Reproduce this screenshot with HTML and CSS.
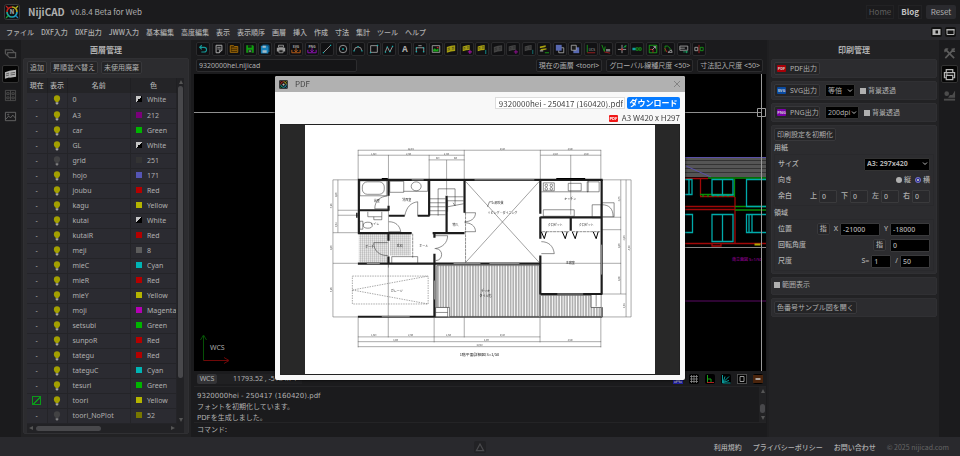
FILE: index.html
```html
<!DOCTYPE html>
<html lang="ja">
<head>
  <meta charset="utf-8">
  <title>NijiCAD</title>
  <link rel="stylesheet" href="styles.css">
</head>
<body>

<!-- shared icons -->
<svg class="defs" width="0" height="0">
  <symbol id="bulb" viewBox="0 0 8 10">
    <circle cx="4" cy="3.4" r="3.1" fill="currentColor"/>
    <path d="M2.6 5.5h2.8v1.6H2.6z" fill="currentColor"/>
    <path d="M2.7 7.2h2.6v1.2L4.6 9.4H3.4L2.7 8.4z" fill="#a5a5a5"/>
  </symbol>
  <symbol id="logo" viewBox="0 0 16 16">
    <rect x=".5" y=".5" width="15" height="15" rx="2" fill="#101012" stroke="#3a3a3d"/>
    <path d="M8 3a5 5 0 0 1 5 5" fill="none" stroke="#b5a81c" stroke-width="1.7"/>
    <path d="M13 8a5 5 0 0 1-5 5" fill="none" stroke="#1f9fc0" stroke-width="1.7"/>
    <path d="M8 13a5 5 0 0 1-5-5" fill="none" stroke="#1fa898" stroke-width="1.7"/>
    <path d="M3 8a5 5 0 0 1 5-5" fill="none" stroke="#c0271b" stroke-width="1.7"/>
    <path d="M2 2l2 2" stroke="#c02020" stroke-width="1.2"/>
    <path d="M14 2l-2 2" stroke="#a8b020" stroke-width="1.2"/>
    <path d="M2 14l2-2" stroke="#20a030" stroke-width="1.2"/>
    <path d="M14 14l-2-2" stroke="#2080b8" stroke-width="1.2"/>
  </symbol>
  <symbol id="layers" viewBox="0 0 12 12">
    <path d="M1 3.5l5-1.5v7L1 10.5zM6 2l5-.5v7L6 9z" fill="currentColor"/>
    <path d="M2 5.5l3-.8M2 7.5l3-.8M7 4.2l3-.4M7 6.2l3-.4" stroke="#222" stroke-width=".7"/>
  </symbol>
</svg>

<header class="header">
  <svg class="logo" viewBox="0 0 16 16"><use href="#logo"/><text x="8" y="10.300" text-anchor="middle" font-size="6" font-weight="700" fill="#b5b5b5">N</text></svg>
  <h1>NijiCAD</h1>
  <span class="version">v0.8.4 Beta for Web</span>
  <nav class="head-nav">
    <a href="#" class="home">Home</a>
    <a href="#" class="blog">Blog</a>
    <button class="reset">Reset</button>
  </nav>
</header>

<nav class="menubar">
  <a href="#">ファイル</a>
  <a href="#">DXF入力</a>
  <a href="#">DXF出力</a>
  <a href="#">JWW入力</a>
  <a href="#">基本編集</a>
  <a href="#">高度編集</a>
  <a href="#">表示</a>
  <a href="#">表示順序</a>
  <a href="#">画層</a>
  <a href="#">挿入</a>
  <a href="#">作成</a>
  <a href="#">寸法</a>
  <a href="#">集計</a>
  <a href="#">ツール</a>
  <a href="#">ヘルプ</a>
  <div class="window-buttons">
    <button aria-label="パネル"><svg viewBox="0 0 10 8"><path d="M1 1h8v6H1z" fill="#b5b5b5"/><path d="M4 2.500h2.500v3H4z" fill="#111"/></svg></button>
    <button aria-label="全画面"><svg viewBox="0 0 10 8"><path d="M1.500 1.500h7v5h-7z" fill="none" stroke="#b5b5b5"/><path d="M1 1h8v1.500H1z" fill="#b5b5b5"/></svg></button>
  </div>
</nav>

<main class="main">

  <div class="tabs">
    <button aria-label="図面"><svg viewBox="0 0 14 14"><path d="M1.500 3h7l2 2v4h-7l-2-2z" fill="none" stroke="#555" stroke-width="1.300"/><path d="M4 6h8.500v5.500H6L4 9.500z" fill="#1b1b1d" stroke="#555" stroke-width="1.300"/></svg></button>
    <button class="active" aria-label="画層"><svg viewBox="0 0 14 14"><path d="M1 4.500l5-1.500v7L1 11.500zM6 3l7-1v7.500L6 10.500z" fill="#b5b5b5"/><path d="M2 6.500l3.500-1M2 8.500l3.500-1M7 5.500l5-.8M7 7.500l5-.8" stroke="#444" stroke-width=".8"/></svg></button>
    <button aria-label="部品"><svg viewBox="0 0 14 14" fill="none" stroke="#4c4c4c"><path d="M1.500 1.500h11v11h-11zM7 1.500v11M3 4h2.500v2H3zM3 8.500h2.500v2H3zM8.500 4H11v2H8.500zM8.500 8.500H11v2H8.500z"/></svg></button>
    <button aria-label="画像"><svg viewBox="0 0 14 14" fill="none" stroke="#666"><path d="M1.500 2.500h11v9h-11z"/><path d="M2 10l3-3.500 2 2 2.500-3 2.500 3"/><circle cx="4.500" cy="5" r=".6"/></svg></button>
  </div>

  <section class="panel layer-panel">
    <h2>画層管理</h2>
    <div class="box layer-box">
      <div class="actions">
        <button>追加</button>
        <button>昇順並べ替え</button>
        <button>未使用廃棄</button>
      </div>
      <div class="layer-scroll">
        <table class="layers">
          <thead><tr><th class="c1">現在</th><th class="c2">表示</th><th>名前</th><th class="c4">色</th></tr></thead>
          <tbody>
            <tr><td>-</td><td><svg><use href="#bulb"/></svg></td><td>0</td><td><i class="white"></i>White</td></tr>
            <tr><td>-</td><td><svg><use href="#bulb"/></svg></td><td>A3</td><td><i class="c212"></i>212</td></tr>
            <tr><td>-</td><td><svg><use href="#bulb"/></svg></td><td>car</td><td><i class="green"></i>Green</td></tr>
            <tr><td>-</td><td><svg><use href="#bulb"/></svg></td><td>GL</td><td><i class="white"></i>White</td></tr>
            <tr><td>-</td><td><svg class="off"><use href="#bulb"/></svg></td><td>grid</td><td><i class="c251"></i>251</td></tr>
            <tr><td>-</td><td><svg><use href="#bulb"/></svg></td><td>hojo</td><td><i class="c171"></i>171</td></tr>
            <tr><td>-</td><td><svg><use href="#bulb"/></svg></td><td>joubu</td><td><i class="red"></i>Red</td></tr>
            <tr><td>-</td><td><svg><use href="#bulb"/></svg></td><td>kagu</td><td><i class="yellow"></i>Yellow</td></tr>
            <tr><td>-</td><td><svg><use href="#bulb"/></svg></td><td>kutai</td><td><i class="white"></i>White</td></tr>
            <tr><td>-</td><td><svg><use href="#bulb"/></svg></td><td>kutaiR</td><td><i class="red"></i>Red</td></tr>
            <tr><td>-</td><td><svg><use href="#bulb"/></svg></td><td>meji</td><td><i class="c8"></i>8</td></tr>
            <tr><td>-</td><td><svg><use href="#bulb"/></svg></td><td>mieC</td><td><i class="cyan"></i>Cyan</td></tr>
            <tr><td>-</td><td><svg><use href="#bulb"/></svg></td><td>mieR</td><td><i class="red"></i>Red</td></tr>
            <tr><td>-</td><td><svg><use href="#bulb"/></svg></td><td>mieY</td><td><i class="yellow"></i>Yellow</td></tr>
            <tr><td>-</td><td><svg><use href="#bulb"/></svg></td><td>moji</td><td><i class="magenta"></i>Magenta</td></tr>
            <tr><td>-</td><td><svg><use href="#bulb"/></svg></td><td>setsubi</td><td><i class="green"></i>Green</td></tr>
            <tr><td>-</td><td><svg><use href="#bulb"/></svg></td><td>sunpoR</td><td><i class="red"></i>Red</td></tr>
            <tr><td>-</td><td><svg><use href="#bulb"/></svg></td><td>tategu</td><td><i class="red"></i>Red</td></tr>
            <tr><td>-</td><td><svg><use href="#bulb"/></svg></td><td>tateguC</td><td><i class="cyan"></i>Cyan</td></tr>
            <tr><td>-</td><td><svg><use href="#bulb"/></svg></td><td>tesuri</td><td><i class="green"></i>Green</td></tr>
            <tr><td><input type="checkbox" class="current" aria-label="toori 現在" checked></td><td><svg><use href="#bulb"/></svg></td><td>toori</td><td><i class="yellow"></i>Yellow</td></tr>
            <tr><td>-</td><td><svg class="off"><use href="#bulb"/></svg></td><td>toori_NoPlot</td><td><i class="c52"></i>52</td></tr>
          </tbody>
        </table>
        <div class="vbar"><b class="up"></b><span></span><b class="down"></b></div>
        <div class="hbar"><b class="prev"></b><span></span><b class="next"></b></div>
      </div>
    </div>
  </section>

  <section class="center">
    <div class="toolbar">
      <button aria-label="元に戻す"><svg viewBox="0 0 12 12"><path d="M4.500 1.500L2 4l2.500 2.500M2 4h5.500a2.700 2.700 0 0 1 0 5.500H4" fill="none" stroke="#159a9a" stroke-width="1.300"/></svg></button>
      <button aria-label="新規"><svg viewBox="0 0 12 12"><path d="M2.500 1.500h7v6l-3 3h-4z" fill="none" stroke="#aaa" stroke-width="1.200"/><path d="M4 4h4M4 6h4M6.500 10.500v-3h3" fill="none" stroke="#aaa"/></svg></button>
      <button aria-label="開く"><svg viewBox="0 0 12 12"><path d="M1.500 2h4l1 1h4v7h-9z" fill="#3a2500" stroke="#b87a08"/><path d="M3 5h6.500M3 7.500h6.500" stroke="#b87a08"/></svg></button>
      <button aria-label="保存"><svg viewBox="0 0 12 12"><path d="M1.500 1.500h8l1 1v8h-9z" fill="#10a010"/><path d="M3.500 1.500h4.500v3H3.500zM3.500 7h5v3.500h-5z" fill="#142814"/><path d="M4.500 8.500h3" stroke="#ccc"/></svg></button>
      <button aria-label="別名保存"><svg viewBox="0 0 12 12"><path d="M3 .5h7l1.500 1.500v7.500H3z" fill="#0b4f78"/><path d="M1 2h7.500L10 3.500v8H1z" fill="#1780b8"/><path d="M3 2h4v2.500H3zM3 7.500h5v3H3z" fill="#a5bac5"/></svg></button>
      <button aria-label="印刷"><svg viewBox="0 0 12 12"><path d="M1 4.500h10v4.500H1z" fill="#999"/><path d="M3 1.500h6v2.500H3zM3.500 7h5v3.500h-5z" fill="#1b1b1b" stroke="#999"/></svg></button>
      <button aria-label="SVG"><svg viewBox="0 0 12 12"><text x="6" y="4.500" text-anchor="middle" font-size="4" font-weight="700" fill="#aaa">SVG</text><path d="M1 7v3.500h10V7M6 5v4M4 7.500l2 2 2-2" fill="none" stroke="#b05a18" stroke-width="1.200"/></svg></button>
      <button aria-label="PNG"><svg viewBox="0 0 12 12"><text x="6" y="4.500" text-anchor="middle" font-size="4" font-weight="700" fill="#aaa">PNG</text><path d="M1 7v3.500h10V7M6 5v4M4 7.500l2 2 2-2" fill="none" stroke="#8a12b0" stroke-width="1.200"/></svg></button>
      <button aria-label="線分"><svg viewBox="0 0 12 12"><path d="M2 10l8-8" stroke="#aaa"/><path d="M1 9.500h1.500V11H1zM9.500 1H11v1.500H9.500z" fill="#10b0b0"/></svg></button>
      <button aria-label="円"><svg viewBox="0 0 12 12"><circle cx="6" cy="6" r="4.500" fill="none" stroke="#aaa"/><path d="M5 5h2v2H5z" fill="#10b0b0"/></svg></button>
      <button aria-label="円弧"><svg viewBox="0 0 12 12"><path d="M1.500 8a4.500 4.500 0 0 1 9 0" fill="none" stroke="#aaa"/><path d="M.5 7.500H2V9H.5zM10 7.500h1.500V9H10zM5.300 2.500h1.500V4H5.300z" fill="#10b0b0"/></svg></button>
      <button aria-label="矩形"><svg viewBox="0 0 12 12"><path d="M2 2h8v8H2z" fill="none" stroke="#aaa"/><path d="M1 9.500h1.500V11H1zM9.500 1H11v1.500H9.500z" fill="#10b0b0"/></svg></button>
      <button aria-label="ポリライン"><svg viewBox="0 0 12 12"><path d="M1.500 9.500l2.500-6 3 6 3.500-7" fill="none" stroke="#aaa"/><path d="M1 9h1.500v1.500H1zM3.300 3h1.500v1.500H3.300zM6.300 8.500h1.500V10H6.300zM9.500 2H11v1.500H9.500z" fill="#10b0b0"/></svg></button>
      <button aria-label="文字"><svg viewBox="0 0 12 12"><text x="6" y="10" text-anchor="middle" font-size="10" font-weight="700" fill="#aaa">A</text></svg></button>
      <button aria-label="寸法"><svg viewBox="0 0 12 12"><path d="M1.500 10V4.500h9V10" fill="none" stroke="#aaa"/><path d="M1 8.500h1.500V10H1zM9.500 8.500H11V10H9.500zM1 4h1.500v1.500H1zM9.500 4H11v1.500H9.500z" fill="#10b0b0"/><path d="M4 2h4" stroke="#aaa"/></svg></button>
      <button aria-label="画像"><svg viewBox="0 0 12 12"><path d="M1.500 2h9v8h-9z" fill="#111" stroke="#aaa"/><path d="M2.500 9V7l2-2 2 2L9 5v4z" fill="#18a018"/><path d="M7 3.500h2V5H7z" fill="#c02020"/></svg></button>
      <button class="ly" aria-label="画層"><svg viewBox="0 0 12 12"><use href="#layers"/></svg></button>
      <button class="ly" aria-label="画層追加"><svg viewBox="0 0 12 12"><use href="#layers" width="10" height="10"/><path d="M9.500 7v5M7 9.500h5" stroke="#c010c0"/></svg></button>
      <button class="ly" aria-label="画層1"><svg viewBox="0 0 12 12"><use href="#layers" width="10" height="10"/><path d="M10.500 7v5" stroke="#10a0a0"/></svg></button>
      <button class="lg" aria-label="画層非表示"><svg viewBox="0 0 12 12"><use href="#layers"/></svg></button>
      <button class="lg" aria-label="非表示追加"><svg viewBox="0 0 12 12"><use href="#layers" width="10" height="10"/><path d="M9.500 7v5M7 9.500h5" stroke="#a010a0"/></svg></button>
      <button class="lg" aria-label="非表示1"><svg viewBox="0 0 12 12"><use href="#layers" width="10" height="10"/><path d="M10.500 7v5" stroke="#108080"/></svg></button>
      <button class="ly" aria-label="画層移動"><svg viewBox="0 0 12 12"><path d="M1 3l7-1.500v2L1 5zM2 6l7-1v1.500L2 8z" fill="#a8a010"/><path d="M1 7.500h4v1.500H1z" fill="#999"/><path d="M7 10.500h5" stroke="#18b018"/></svg></button>
      <button aria-label="前面"><svg viewBox="0 0 12 12"><path d="M4.500 4.500h6v6h-6z" fill="none" stroke="#aaa"/><path d="M1 1h7v7H1z" fill="#5868b0"/></svg></button>
      <button aria-label="背面"><svg viewBox="0 0 12 12"><path d="M4 4h7v7H4z" fill="#5868b0"/><path d="M1.500 1.500h6v6h-6z" fill="#1b1b1b" stroke="#aaa"/></svg></button>
      <button aria-label="UCS"><svg viewBox="0 0 12 12"><path d="M1.500 1v9" stroke="#18a018"/><path d="M1.500 10.500H11" stroke="#b02020"/><text x="7" y="8.500" text-anchor="middle" font-size="4" fill="#aaa">UCS</text></svg></button>
      <button aria-label="UCS設定"><svg viewBox="0 0 12 12"><path d="M1 1l3 8 1-6" fill="none" stroke="#18a018"/><path d="M4 9.500l7 1.500" stroke="#b02020"/><path d="M6 6h5v3H6z" fill="#777"/></svg></button>
      <button aria-label="移動"><svg viewBox="0 0 12 12"><path d="M6 1v10M1 6.500h10" stroke="#aaa"/><path d="M8 4.500l3-3" stroke="#10b0b0"/><path d="M9 2h2v2H9z" fill="#18a018"/><path d="M5 5.500h2v2H5z" fill="#c02020"/></svg></button>
      <button aria-label="延長"><svg viewBox="0 0 12 12"><path d="M.5 4.500h4v3h-4z" fill="#10a0a0"/><path d="M5 4.500h2.500v3H5zM8.500 4.500H11v3H8.500z" fill="none" stroke="#18a018"/></svg></button>
      <button aria-label="尺度"><svg viewBox="0 0 12 12"><path d="M1.500 1.500h9v9h-9z" fill="none" stroke="#18b018"/><path d="M2 6.500h4v4" fill="none" stroke="#c02020"/><path d="M5 7l4-4M6.500 3H9v2.500" fill="none" stroke="#aaa"/></svg></button>
      <button aria-label="回転"><svg viewBox="0 0 12 12"><path d="M2.500 9V2.500h3l3 2.500v2" fill="none" stroke="#18a018"/><path d="M6 10l4-3 1 3z" fill="none" stroke="#aaa"/><path d="M2 5l3 5" stroke="#c02020"/></svg></button>
      <button aria-label="ストレッチ"><svg viewBox="0 0 12 12"><path d="M1 2.500h9.500v5H1zM1 5h6" fill="none" stroke="#aaa"/><path d="M5 9.500h6M9 8v3" stroke="#18a060"/></svg></button>
      <button aria-label="鏡像"><svg viewBox="0 0 12 12"><path d="M6 1v10" stroke="#c02020"/><path d="M1 4h3.500v4H1z" fill="none" stroke="#aaa"/><path d="M7.500 4H11v4H7.500z" fill="none" stroke="#18a018"/></svg></button>
    </div>
    <div class="infobar">
      <input type="text" class="filename" value="9320000hei.nijicad" aria-label="ファイル名">
      <button>現在の画層 &lt;toori&gt;</button>
      <button>グローバル線種尺度 &lt;50&gt;</button>
      <button>寸法記入尺度 &lt;50&gt;</button>
    </div>

    <div class="canvas">
      <svg viewBox="194 74 572 297" preserveAspectRatio="xMaxYMax slice" fill="none">
        <path d="M194 112.500h568" stroke="#8f8f8f"/>
        <path d="M685 301h81" stroke="#5c0a66"/>
        <!-- elevation -->
        <path d="M685 157h81v20h-81z" fill="#555"/>
        <path d="M685 160.500h81M685 164.500h81M685 168.500h81M685 172.500h81" stroke="#333"/>
        <path d="M685 157.500h81M686 166l25 11" stroke="#5a50a8"/>
        <path d="M685 178.500h23M700.500 179v17M735 197v46M685 206.500h50M685 209.500h50M685 243.500h81M700 196.500h35M712 243v3h9v-3" stroke="#a00808" stroke-width="1.300"/>
        <path d="M708 178h58M734.500 179v18M700 194.500h35M735 206.500h31M735 210h31M703 194v3M708 194v3M713 194v3M718 194v3M723 194v3M728 194v3" stroke="#089008" stroke-width="1.300"/>
        <path d="M685 179.500h7v15h-7M689 180v14M712 179.500h21v15.500h-21zM722.500 180v15M766 179.500h-19.500v27H766M685 214.500h7.500v18H685M712 214.500h21v27h-21zM722.500 215v26M766 214.500h-19.500v18H766M749 215v17M752 215v17" stroke="#0aa" stroke-width="1.300"/>
        <path d="M685 247.500h81" stroke="#888"/>
        <path d="M754.500 244.500h6" stroke="#b0a800" stroke-width="2"/>
        <text x="732" y="261" font-size="4" fill="#b000b0">南立面図 S=1/50</text>
        <!-- cursor -->
        <path d="M761.500 74v297M757.500 108.500h8v8h-8z" stroke="#9a9a9a"/>
        <!-- axes -->
        <path d="M203.500 360.500V336M200.500 340l3-5 3 5" stroke="#065006"/>
        <path d="M203.500 360.500H228M224 357.500l5 3-5 3" stroke="#700808"/>
        <text x="210" y="350" font-size="7" fill="#aaa">WCS</text>
      </svg>
    </div>

    <div class="statusbar">
      <button class="wcs">WCS</button>
      <span class="coords">11793.52 , -5184.74</span>
      <div class="snaps">
        <button aria-label="スナップ"><svg viewBox="0 0 10 10"><path d="M0 0h10v10H0z" fill="#2020a0"/><path d="M1 8h3v-3h2v3h3" fill="none" stroke="#aaa"/></svg></button>
        <button aria-label="グリッド"><svg viewBox="0 0 10 10"><path d="M2.500 1v8M5 1v8M7.500 1v8M1 2.500h8M1 5h8M1 7.500h8" stroke="#888" stroke-width=".8"/></svg></button>
        <button aria-label="直交"><svg viewBox="0 0 10 10" fill="none"><path d="M2.500 1v7" stroke="#18a018"/><path d="M2 8.500h7" stroke="#b02020"/><path d="M3 5h3v3" stroke="#18a018"/></svg></button>
        <button aria-label="極"><svg viewBox="0 0 10 10"><path d="M1.500 1v8h8M2 8.500L8 2.500M2 8.500l2-6M2 8.500l6-2" fill="none" stroke="#0a9a9a"/></svg></button>
        <button aria-label="選択"><svg viewBox="0 0 10 10" fill="none" stroke="#999"><path d="M.5.500h9v9h-9z" stroke-dasharray="1 1"/><path d="M3 2.500h4v5H3z"/></svg></button>
        <button aria-label="線"><svg viewBox="0 0 10 10"><path d="M0 1h10v8H0z" fill="#4a240c"/><path d="M2.500 5h5" stroke="#ccc" stroke-width="1.500"/></svg></button>
      </div>
    </div>

    <div class="log">
      <p>9320000hei - 250417 (160420).pdf<br>フォントを初期化しています。<br>PDFを生成しました。</p>
      <div class="vbar"><b class="up"></b><span></span><b class="down"></b></div>
    </div>
    <label class="command">コマンド: <input type="text"></label>
  </section>

  <section class="panel print-panel">
    <h2>印刷管理</h2>
    <div class="box row">
      <button class="out"><em class="pdf">PDF</em>PDF出力</button>
    </div>
    <div class="box row">
      <button class="out"><em class="svg">SVG</em>SVG出力</button>
      <select aria-label="倍率"><option>等倍</option></select>
      <label><input type="checkbox">背景透過</label>
    </div>
    <div class="box row">
      <button class="out"><em class="png">PNG</em>PNG出力</button>
      <select class="dpi" aria-label="解像度"><option>200dpi</option></select>
      <label><input type="checkbox">背景透過</label>
    </div>
    <div class="box settings">
      <button>印刷設定を初期化</button>
      <h3>用紙</h3>
      <div class="group">
        <div class="field"><label for="size">サイズ</label><select id="size" class="size"><option>A3: 297x420</option></select></div>
        <div class="field"><span>向き</span>
          <label><input type="radio" name="dir">縦</label>
          <label><input type="radio" name="dir" checked>横</label>
        </div>
        <div class="field margins"><span>余白</span>
          <label>上<input type="text" value="0"></label>
          <label>下<input type="text" value="0"></label>
          <label>左<input type="text" value="0"></label>
          <label>右<input type="text" value="0"></label>
        </div>
      </div>
      <h3>領域</h3>
      <div class="group">
        <div class="field"><span>位置</span>
          <button class="pick">指</button>
          <label>X<input type="text" value="-21000"></label>
          <label>Y<input type="text" value="-18000"></label>
        </div>
        <div class="field"><span>回転角度</span>
          <button class="pick">指</button>
          <input type="text" value="0" aria-label="回転角度">
        </div>
        <div class="field"><span>尺度</span>
          <label>S=<input type="text" class="s1" value="1"></label>
          <label>/<input type="text" class="s2" value="50"></label>
        </div>
      </div>
    </div>
    <div class="box range"><label><input type="checkbox">範囲表示</label></div>
    <div class="box row"><button>色番号サンプル図を開く</button></div>
  </section>

  <div class="tabs right">
    <button aria-label="ツール"><svg viewBox="0 0 14 14"><path d="M2 2l10 10M12.500 1.500l-10 10.500" stroke="#5c5c5c" stroke-width="1.800"/><path d="M1 4l3-3 2 1-4 4z" fill="#5c5c5c"/><path d="M10 1.500v3h3" fill="none" stroke="#5c5c5c" stroke-width="1.500"/></svg></button>
    <button class="active" aria-label="印刷"><svg viewBox="0 0 14 14" fill="none" stroke="#b5b5b5" stroke-width="1.300"><path d="M3.500 5V1.700h7V5M3.500 10.500h-2V5h11v5.500h-2"/><path d="M3.500 8h7v4.500h-7z"/><path d="M3 6.500h2"/></svg></button>
    <button aria-label="図形"><svg viewBox="0 0 14 14"><path d="M1 9.500h4.500l2-3H10l3-5v8H1z" fill="#4c4c4c"/><path d="M1 10.500h12v2H1z" fill="#4c4c4c"/><circle cx="4" cy="5" r="2.500" fill="#4c4c4c"/></svg></button>
  </div>
</main>

<footer class="footer">
  <button class="top" aria-label="開く"><svg viewBox="0 0 10 10"><path d="M5 2.500L8 8H2z" fill="none" stroke="#4a4a4d"/></svg></button>
  <a href="#">利用規約</a>
  <a href="#">プライバシーポリシー</a>
  <a href="#">お問い合わせ</a>
  <small>© 2025 nijicad.com</small>
</footer>

<div class="overlay">
  <div class="dialog" role="dialog" aria-labelledby="dlg">
    <div class="dialog-head">
      <svg class="logo" viewBox="0 0 16 16"><use href="#logo"/><circle cx="8" cy="8" r="2" fill="#b5b5b5"/></svg>
      <span id="dlg">PDF</span>
      <button class="close" aria-label="閉じる"><svg viewBox="0 0 8 8"><path d="M1 1l6 6M7 1L1 7" stroke="#777" stroke-width=".8"/></svg></button>
    </div>
    <div class="dialog-body">
      <div class="download">
        <input type="text" value="9320000hei - 250417 (160420).pdf" aria-label="ファイル名">
        <button>ダウンロード</button>
      </div>
      <div class="paper-size"><em class="pdf">PDF</em>A3 W420 x H297</div>
      <div class="viewer">
        <svg class="plan" viewBox="305 125 351 249" fill="none" stroke="#222" stroke-width=".5">
          <defs>
            <pattern id="tile" width="2" height="2" patternUnits="userSpaceOnUse"><path d="M0 0h2M0 0v2" stroke="#444" stroke-width=".5"/></pattern>
            <pattern id="deck" width="2.700" height="4" patternUnits="userSpaceOnUse"><path d="M.5 0v4M1.300 0v4" stroke="#555" stroke-width=".45"/></pattern>
          </defs>
          <!-- dimension lines -->
          <g stroke="#555" stroke-width=".5">
            <path d="M358 150.300h244M358 155.300h107M541 155.300h61M429 160h36"/>
            <path d="M358.300 150v30M388.700 155v113M429.500 155v25M447 160v35M464.700 150v30M541 150v30M571.500 155v60M601.700 150v30"/>
            <path d="M333 180v137.500M338 180v53M333 180h25M338 210.500h20M338 215.500h20M333 233h25M333 263.700h25M333 317.500h25"/>
            <path d="M621.700 180v114.500M627 180v137.500M632 180v137.500M603 180h29M603 217.500h19M603 230h19M541 263.700h81M603 294.500h24M603 317.500h29"/>
            <path d="M358 337.500h183M358 342.300h244M358 347.300h244"/>
            <path d="M358.300 318v30M388.500 264v74M434.500 318v25M464.700 318v20M540.700 318v25M601.700 318v30"/>
          </g>
          <g fill="#333" stroke="none" font-size="2" text-anchor="middle">
            <text x="411" y="149.800">12,285</text><text x="374" y="154.800">1,820</text><text x="409" y="154.800">2,730</text><text x="447" y="154.800">2,730</text>
            <text x="438" y="159.500">910</text><text x="456" y="159.500">910</text><text x="503" y="149.800">4,550</text><text x="571" y="149.800">3,640</text>
            <text x="556" y="154.800">1,820</text><text x="587" y="154.800">1,820</text>
            <text x="374" y="337">1,820</text><text x="411" y="337">2,730</text><text x="449" y="337">1,820</text><text x="503" y="337">4,550</text>
            <text x="396" y="341.800">4,550</text><text x="487" y="341.800">6,370</text><text x="571" y="341.800">3,640</text><text x="480" y="346.800">14,560</text>
            <text transform="translate(332.300 206) rotate(-90)">3,185</text><text transform="translate(332.300 248) rotate(-90)">1,820</text><text transform="translate(332.300 290) rotate(-90)">3,185</text>
            <text transform="translate(337.300 195) rotate(-90)">1,820</text><text transform="translate(337.300 225) rotate(-90)">1,365</text>
            <text transform="translate(621 199) rotate(-90)">2,275</text><text transform="translate(621 246) rotate(-90)">1,820</text><text transform="translate(621 279) rotate(-90)">1,820</text>
            <text transform="translate(626.300 238) rotate(-90)">6,825</text><text transform="translate(626.300 306) rotate(-90)">1,365</text><text transform="translate(631.300 248) rotate(-90)">8,190</text>
          </g>
          <!-- hatching -->
          <path d="M359 234h29v29h-29zM390 234h21v22h-21z" fill="url(#tile)" stroke="none"/>
          <path d="M437 266h103v51h-90v-9h-13zM541 296h51v12h10v9h-61z" fill="url(#deck)"/>
          <path d="M436 308h12v9.500h-12zM436 313h12M592 295h10v13h-10zM597 295v12" fill="#fff"/>
          <!-- walls -->
          <g stroke="#1c1c1c" stroke-width="2.200">
            <path d="M358 180h245.500M359 180v54M388.800 180v16M388.800 206v5M358 210.500h31M429.500 180v36M389 216h16M418 216h12M447 196v37M358 233.400h54M433 233.400h32M465 180v33"/>
            <path d="M388.700 233v8M388.700 257v7M358 264h77M434.800 233v5M434.800 254v64M435 264h106M541 180v34M541 217v22M541 256v39M541 217.700h62M571.500 218v13M602.500 180v115M541 294.500h62M358 317.300h77"/>
          </g>
          <g stroke="#999" stroke-width="1"><path d="M367 264h13M454 264h27M490 264h30M434.800 281v19M382 317.300h28M602.500 245v30M558 294.500h26M412 180h12M475 180h60"/></g>
          <path d="M435 317.700h168v-10" stroke="#222" stroke-width="1"/>
          <path d="M557 178.700h29M382 178.700h6M357 213v5" stroke="#000" stroke-width="1.300"/>
          <!-- fixtures -->
          <rect x="362.500" y="182" width="22" height="12.500" rx="5"/>
          <path d="M360 181h27v15h-27zM390 181.500h14v11h-14zM404 191.500h24v-11M360 221.500h3v8h-3zM368 212v5h14v-5M374 217v3h8v-3"/>
          <ellipse cx="416.500" cy="186.500" rx="5" ry="4.500"/><ellipse cx="368" cy="225.500" rx="4.500" ry="3"/>
          <path d="M544 183h11v8h-11zM542 192h47v-11M569 183.500h13v7.500h-13zM588 182h12v10h-12zM544 210h31v6.500h-31z"/>
          <circle cx="547" cy="185.500" r="1.300"/><circle cx="552" cy="185.500" r="1.300"/><circle cx="547" cy="189" r="1.300"/><circle cx="552" cy="189" r="1.300"/>
          <!-- stairs -->
          <path d="M430 199h16M430 203h16M430 207h16M430 211h16M430 215h16M438.500 216v-27h17v17l-2-3M448 197h16M448 201h16M448 207l16-3M448 212V200"/>
          <!-- doors -->
          <path d="M375 209c0-8 5-12 13-13M375 209h13M405 216c2-9 6-13 13-14v14M389 222c7 0 11 4 12 10h-12M374 243c0 8 5 13 14 13M374 243h14M392 257h26v7h-26zM435 249c8-1 13-6 13-13h-13M436 249c8 0 8 12 0 12M465 213h11c0 6-5 9-11 9M465 232h11c0-6-5-9-11-9M542 242c7 0 12 4 13 12h-13M593 205h9v13h-9zM602 203h13v14h-13M603 205c7 0 11 4 11 12"/>
          <path d="M542 232l3 7 2-7M563 232l3 7 2-7M573 232l3 7 2-7M594 232l3 7 2-7" stroke="#000" stroke-width="1"/>
          <path d="M543 232h27M573 232h28M413 234v24M466 213v50" stroke-dasharray="3 .6"/>
          <!-- void and garage -->
          <path d="M466 181.500l74 81.500M540 181.500L466 263" stroke="#444"/>
          <path d="M352.500 276.500h76v28h-76zM352.500 290.500l76-14M352.500 290.500l76 14" stroke="#555" stroke-dasharray="1.500 1"/>
          <path d="M488 207l2-5h3"/>
          <g fill="#222" stroke="none" font-size="3" text-anchor="middle">
            <text x="377" y="202">浴室</text><text x="407" y="201">洗面室</text><text x="375" y="225">トイレ</text><text x="370" y="248">ポーチ</text>
            <text x="400" y="247">玄関</text><text x="424" y="247">ホール</text><text x="456" y="226">物入</text><text x="498" y="204">上部吹抜</text>
            <text x="503" y="214">リビング・ダイニング</text><text x="571" y="200">キッチン</text><text x="556" y="226">クロゼット</text><text x="587" y="226">クロゼット</text>
            <text x="571" y="264">主寝室</text><text x="397" y="292">ガレージ</text><text x="486" y="292">デッキ</text><text x="486" y="297">タイル貼</text>
          </g>
          <text x="480" y="357" font-size="4" text-anchor="middle" fill="#222" stroke="none">1階平面詳細図 S=1/50</text>
        </svg>
      </div>
    </div>
  </div>
</div>

</body>
</html>
```
FILE: styles.css
```css
* {
    box-sizing: border-box;
}

html, body {
    height: 100%;
}

body {
    margin: 0;
    display: flex;
    flex-direction: column;
    background: #1b1b1d;
    color: #b0b0b0;
    font-family: "Noto Sans", "Noto Sans CJK JP", sans-serif;
    font-size: 7px;
    line-height: 10px;
    overflow: hidden;
}

button, input, select {
    font: inherit;
    color: inherit;
    margin: 0;
    padding: 0;
}

button {
    background: #242426;
    border: 1px solid #38383b;
    border-radius: 2px;
    white-space: nowrap;
}

a {
    color: inherit;
    text-decoration: none;
    white-space: nowrap;
}

svg {
    display: block;
}

.defs {
    position: absolute;
}

/* header */

.header {
    flex: none;
    height: 24px;
    display: flex;
    align-items: center;
    padding: 0 4px;
    font-family: "Noto Sans CJK JP", sans-serif;
}

.logo {
    width: 16px;
    height: 16px;
}

h1 {
    margin: 0 6px 0 8px;
    font-size: 10px;
    font-weight: 700;
}

.version {
    font-size: 8px;
}

.head-nav {
    margin-left: auto;
    display: flex;
    align-items: center;
    gap: 4px;
    font-size: 8px;
}

.head-nav a {
    padding: 1px 2px;
    border: 1px solid #222224;
}

.home {
    color: #5f5f5f;
}

.blog {
    font-weight: 700;
    color: #c5c5c5;
}

.reset {
    height: 14px;
    width: 30px;
    background: #2a2a2e;
    border: 0;
}

.menubar {
    flex: none;
    height: 16px;
    display: flex;
    align-items: center;
    gap: 7px;
    padding: 0 4px 0 6px;
    background: #29292d;
    font-weight: 500;
    font-family: "Noto Sans CJK JP", sans-serif;
}

.window-buttons {
    margin-left: auto;
    display: flex;
    gap: 3px;
}

.window-buttons button {
    width: 11px;
    height: 10px;
    background: #111;
    border: 0;
}

.window-buttons svg {
    width: 11px;
    height: 8px;
}

/* main */

.main {
    flex: 1;
    min-height: 0;
    display: flex;
}

.tabs {
    flex: none;
    width: 21px;
    padding: 4px 2px;
    display: flex;
    flex-direction: column;
    align-items: center;
    gap: 3px;
}

.tabs button {
    width: 17px;
    height: 18px;
    display: flex;
    align-items: center;
    justify-content: center;
    background: none;
    border-color: transparent;
}

.tabs svg {
    width: 13px;
    height: 13px;
}

.tabs .active {
    background: #050505;
    border-color: #333;
}

.panel {
    flex: none;
    background: #222224;
    padding: 2px;
}

.panel h2 {
    margin: 0;
    font-size: 8px;
    line-height: 16px;
    text-align: center;
    font-family: "Noto Sans CJK JP", sans-serif;
}

.box {
    background: #2c2c2f;
    border: 1px solid #303033;
    border-radius: 2px;
}

.layer-panel {
    width: 170px;
    display: flex;
    flex-direction: column;
    padding-bottom: 3px;
}

.layer-box {
    flex: 1;
    min-height: 0;
    padding: 2px 4px 2px 3px;
}

.actions {
    display: flex;
    gap: 3px;
    padding-bottom: 4px;
}

.actions button, .row button {
    height: 13px;
    padding: 0 2px;
}

.layer-scroll {
    display: grid;
    grid-template-columns: 1fr 7px;
    grid-template-rows: auto 9px;
    background: #222225;
}

.layers {
    width: 100%;
    table-layout: fixed;
    border-collapse: collapse;
    overflow: hidden;
}

.layers th {
    height: 15px;
    padding: 0;
    background: #242427;
    border-right: 1px solid #1f1f22;
    font-weight: 500;
}

.c1 { width: 20px; }
.c2 { width: 20px; }
.c4 { width: 46px; }

.layers td {
    height: 15px;
    padding: 0 0 0 5px;
    background: #2b2b31;
    border-right: 1px solid #242428;
    border-bottom: 1px solid #242428;
    overflow: hidden;
    white-space: nowrap;
}

.layers td:nth-child(-n+2) {
    padding: 0;
    text-align: center;
}

.layers td svg {
    width: 8px;
    height: 10px;
    margin: 0 auto;
    color: #a3a000;
}

.layers td .off {
    color: #4c4c4c;
    opacity: .7;
}

.layers i {
    display: inline-block;
    width: 6px;
    height: 6px;
    margin-right: 5px;
}

.white { background: linear-gradient(135deg, #c5c5c5 50%, #000 50%); }
.c212 { background: #7a007a; }
.green { background: #00b400; }
.c251 { background: #333; }
.c171 { background: #5555b4; }
.red { background: #b40000; }
.yellow { background: #b4b400; }
.c8 { background: #5c5c5c; }
.cyan { background: #00b4b4; }
.magenta { background: #b400b4; }
.c52 { background: #777700; }

.current {
    appearance: none;
    display: block;
    width: 9px;
    height: 9px;
    margin: 0 auto;
    border: 1px solid #0b9a1a;
    background: linear-gradient(135deg, transparent 45%, #0b9a1a 45%, #0b9a1a 60%, transparent 60%);
}

/* scrollbars */

.vbar, .hbar {
    display: flex;
    align-items: center;
}

.vbar {
    flex-direction: column;
    padding: 2px 0;
    gap: 2px;
}

.vbar span, .hbar span {
    background: #48484b;
    border-radius: 3px;
}

.vbar span {
    width: 5px;
    height: 292px;
}

.hbar {
    padding: 0 2px;
    gap: 3px;
}

.hbar span {
    width: 65px;
    height: 5px;
}

.vbar b, .hbar b {
    border: 2px solid transparent;
}

.vbar .up { border-bottom: 4px solid #555; border-top: 0; }
.vbar .down { border-top: 4px solid #555; border-bottom: 0; margin-top: auto; }
.hbar .prev { border-right: 4px solid #555; border-left: 0; }
.hbar .next { border-left: 4px solid #555; border-right: 0; margin-left: auto; }

/* center */

.center {
    flex: 1;
    min-width: 0;
    margin: 0 1px 0 3px;
    display: flex;
    flex-direction: column;
}

.toolbar {
    display: flex;
    justify-content: space-between;
    padding: 2px 60px 2px 2px;
}

.toolbar button {
    width: 14px;
    height: 14px;
    display: flex;
    align-items: center;
    justify-content: center;
    background: #111113;
    border-color: #2a2a2c;
}

.toolbar svg {
    width: 10px;
    height: 10px;
    overflow: visible;
}

.ly { color: #a8a010; }
.toolbar .lg { color: #444; }

.infobar {
    display: flex;
    gap: 4px;
    padding: 1px 3px 2px 2px;
}

.infobar button, .filename {
    height: 13px;
    padding: 0 2px;
    background: #151517;
    border: 1px solid #2c2c2e;
    border-radius: 2px;
}

.filename {
    width: 161px;
    margin-right: auto;
}

.canvas {
    flex: 1;
    min-height: 0;
    background: #000;
}

.canvas svg {
    width: 100%;
    height: 100%;
}

.statusbar {
    flex: none;
    height: 16px;
    display: flex;
    align-items: center;
    padding: 0 3px;
    border-bottom: 1px solid #242426;
}

.wcs {
    width: 20px;
    height: 10px;
    line-height: 8px;
    background: #333336;
    border: 0;
}

.coords {
    width: 85px;
    padding-left: 16px;
    background: #202022;
}

.snaps {
    margin-left: auto;
    display: flex;
    gap: 6px;
}

.snaps button {
    width: 10px;
    height: 10px;
    background: #000;
    border: 0;
}

.log {
    flex: none;
    height: 36px;
    display: flex;
    justify-content: space-between;
    font-family: "DejaVu Sans", "Noto Sans CJK JP", sans-serif;
    border-bottom: 1px solid #242426;
}

.log p {
    margin: 4px 3px;
    line-height: 11px;
}

.log .vbar {
    width: 7px;
    background: #222224;
}

.log .vbar span {
    height: 9px;
    margin-top: 9px;
}

.command {
    flex: none;
    height: 14px;
    display: flex;
    align-items: center;
    padding: 0 3px;
}

.command input {
    flex: 1;
    background: none;
    border: 0;
}

/* print settings */

.print-panel {
    width: 172px;
    padding: 2px 2px 2px 2px;
    border-left: 2px solid #1f1f21;
}

.print-panel h2 {
    margin-bottom: 1px;
}

.print-panel .box {
    margin-bottom: 3px;
    padding: 2px;
}

.row {
    display: flex;
    align-items: center;
    gap: 5px;
}

.out {
    width: 46px;
}

em {
    display: inline-block;
    width: 9px;
    margin-right: 4px;
    border-radius: 1px;
    line-height: 7px;
    font-size: 4px;
    font-weight: 700;
    font-style: normal;
    text-align: center;
    vertical-align: 1px;
    color: #d0d0d0;
}

.row .pdf { background: #a80008; }
.svg { background: #0a4aa0; }
.png { background: #7a00a8; }

select {
    appearance: none;
    height: 13px;
    padding: 0 7px 0 2px;
    border: 1px solid #333;
    border-radius: 1px;
    background: #000 url("data:image/svg+xml,%3Csvg xmlns='http://www.w3.org/2000/svg' width='6' height='4'%3E%3Cpath d='M1 .5l2 2 2-2' fill='none' stroke='%23bbb'/%3E%3C/svg%3E") no-repeat right 1px center;
}

.row select {
    width: 30px;
}

.row .dpi {
    width: 34px;
}

.print-panel label {
    display: flex;
    align-items: center;
    gap: 2px;
}

[type=checkbox]:not(.current) {
    appearance: none;
    width: 6px;
    height: 6px;
    background: #b0b0b0;
}

[type=radio] {
    appearance: none;
    width: 6px;
    height: 6px;
    border-radius: 50%;
    background: #b0b0b0;
}

[type=radio]:checked {
    background: radial-gradient(#b0b0b0 25%, #2222a0 35%);
    outline: 1px solid #8080b0;
    outline-offset: -1px;
}

.settings > button {
    height: 13px;
    padding: 0 2px;
}

.print-panel h3 {
    margin: 0;
    font-size: 7px;
    font-weight: 500;
    line-height: 13px;
}

.group {
    padding: 1px 3px;
    border: 1px solid #29292c;
    font-weight: 500;
}

.field {
    display: flex;
    align-items: center;
    gap: 4px;
    height: 16px;
}

.field > :first-child {
    margin-right: auto;
}

.field input[type=text] {
    width: 40px;
    height: 13px;
    padding: 0 2px;
    background: #000;
    border: 1px solid #3a3a3c;
    border-radius: 1px;
}

.margins label input[type=text] {
    width: 18px;
    background: #29292c;
}

.field label .s1[type=text] { width: 20px; }
.field label .s2[type=text] { width: 30px; }

.field .size {
    width: 66px;
    font-weight: 700;
}

.pick {
    width: 13px;
    height: 12px;
}

.range {
    height: 18px;
}

/* footer */

.footer {
    flex: none;
    height: 19px;
    display: grid;
    grid-template-columns: 1fr auto auto auto auto;
    align-items: center;
    gap: 11px;
    padding: 0 11px;
    background: #29292d;
    font-family: "Noto Sans CJK JP", sans-serif;
    font-weight: 500;
}

.top {
    justify-self: end;
    width: 12px;
    height: 12px;
    position: absolute;
    left: 50%;
    transform: translateX(-50%);
    background: #222225;
    border: 0;
}

.footer a:first-of-type {
    grid-column: 2;
}

.footer small {
    font-size: 7px;
    font-weight: 400;
    color: #666;
}

/* PDF dialog */

.overlay {
    position: fixed;
    inset: 0;
    display: grid;
    place-items: center;
}

.dialog {
    width: 410px;
    background: #f8f8f8;
    border-radius: 2px;
    color: #444;
    font-family: "Noto Sans CJK JP", sans-serif;
    font-size: 8px;
    box-shadow: 0 0 3px #000;
}

.dialog-head {
    height: 16px;
    display: flex;
    align-items: center;
    gap: 7px;
    padding: 0 4px;
    background: #b1b1b1;
    border-radius: 2px 2px 0 0;
}

.dialog-head .logo {
    width: 9px;
    height: 9px;
}

.close {
    margin-left: auto;
    background: none;
    border: 0;
}

.close svg {
    width: 8px;
    height: 8px;
}

.dialog-body {
    padding: 5px;
}

.download {
    display: flex;
    justify-content: flex-end;
    gap: 2px;
}

.download input {
    width: 130px;
    height: 12px;
    padding: 0 1px;
    background: #fff;
    border: 1px solid #ddd;
    text-align: right;
}

.download button {
    width: 53px;
    height: 12px;
    line-height: 10px;
    background: #077bff;
    border: 0;
    color: #fff;
    font-weight: 700;
}

.paper-size {
    line-height: 12px;
    margin: 3px 0 0;
    text-align: right;
}

.dialog .pdf {
    background: #f01818;
    color: #fff;
}

.viewer {
    padding: 0 24px;
    background: #282828;
    border: 1px solid #222;
}

.plan {
    width: 100%;
    background: #fff;
}
```
